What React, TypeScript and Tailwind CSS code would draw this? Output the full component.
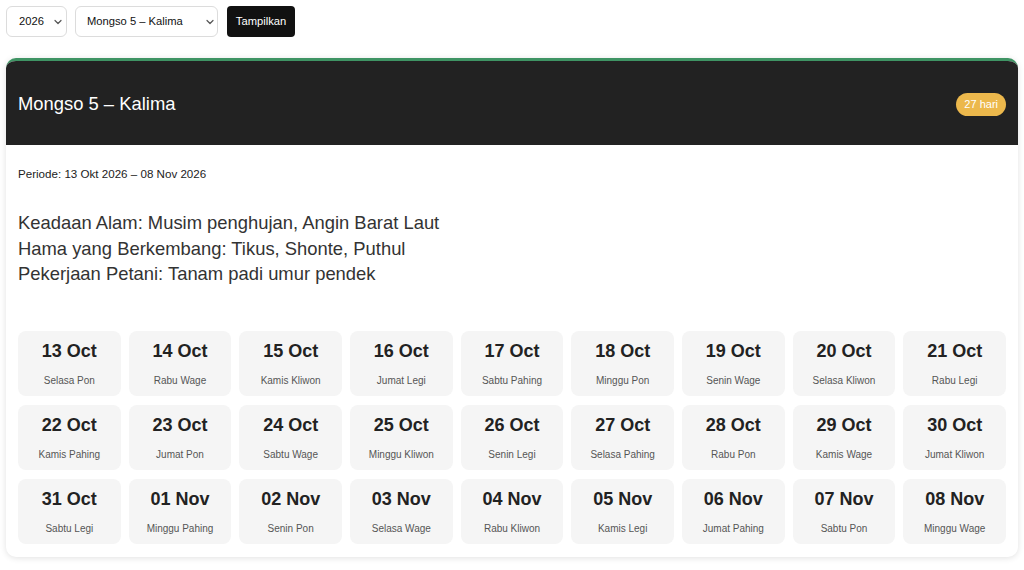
import React from "react";

const days: [string, string][] = [
  ["13 Oct", "Selasa Pon"],
  ["14 Oct", "Rabu Wage"],
  ["15 Oct", "Kamis Kliwon"],
  ["16 Oct", "Jumat Legi"],
  ["17 Oct", "Sabtu Pahing"],
  ["18 Oct", "Minggu Pon"],
  ["19 Oct", "Senin Wage"],
  ["20 Oct", "Selasa Kliwon"],
  ["21 Oct", "Rabu Legi"],
  ["22 Oct", "Kamis Pahing"],
  ["23 Oct", "Jumat Pon"],
  ["24 Oct", "Sabtu Wage"],
  ["25 Oct", "Minggu Kliwon"],
  ["26 Oct", "Senin Legi"],
  ["27 Oct", "Selasa Pahing"],
  ["28 Oct", "Rabu Pon"],
  ["29 Oct", "Kamis Wage"],
  ["30 Oct", "Jumat Kliwon"],
  ["31 Oct", "Sabtu Legi"],
  ["01 Nov", "Minggu Pahing"],
  ["02 Nov", "Senin Pon"],
  ["03 Nov", "Selasa Wage"],
  ["04 Nov", "Rabu Kliwon"],
  ["05 Nov", "Kamis Legi"],
  ["06 Nov", "Jumat Pahing"],
  ["07 Nov", "Sabtu Pon"],
  ["08 Nov", "Minggu Wage"],
];

function Chevron() {
  return (
    <svg width="10" height="10" viewBox="0 0 10 10" className="text-[#555]">
      <path d="M2 3.5 L5 6.5 L8 3.5" fill="none" stroke="currentColor" strokeWidth="1.2" strokeLinecap="round" strokeLinejoin="round" />
    </svg>
  );
}

export default function App() {
  return (
    <div className="min-h-[570px] bg-white px-[6px] pt-[6px] font-[family-name:'Liberation_Sans',Arial,sans-serif]">
      <div className="flex items-center gap-[8px]">
        <div className="flex h-[31px] w-[61px] items-center justify-between rounded-[6px] border border-[#dcdcdc] bg-white pl-[12px] pr-[3px] text-[11.2px] text-[#111]">
          <span>2026</span>
          <Chevron />
        </div>
        <div className="flex h-[31px] w-[143px] items-center justify-between rounded-[6px] border border-[#dcdcdc] bg-white pl-[11px] pr-[2px] text-[11.2px] text-[#111]">
          <span>Mongso 5 – Kalima</span>
          <Chevron />
        </div>
        <button className="ml-[1px] flex h-[31px] w-[68px] items-center justify-center rounded-[4px] bg-[#111] text-[11.2px] text-white">
          Tampilkan
        </button>
      </div>

      <div className="mt-[21px] overflow-hidden rounded-[10px] border-t-[3px] border-[#3f9464] bg-white shadow-[0_1px_6px_rgba(0,0,0,0.12)]">
        <div className="flex h-[84px] items-center justify-between bg-[#222] px-[12px] pt-[2px]">
          <div className="text-[18.4px] text-white">Mongso 5 – Kalima</div>
          <div className="flex h-[23px] items-center rounded-full bg-[#ecb84c] px-[8px] text-[11px] text-white">
            27 hari
          </div>
        </div>
        <div className="px-[12px] pb-[13px] pt-[20px]">
          <div className="text-[11.6px] leading-[18px] text-[#222]">Periode: 13 Okt 2026 – 08 Nov 2026</div>
          <div className="mt-[27px] text-[18.4px] leading-[25.5px] text-[#333]">
            <div>Keadaan Alam: Musim penghujan, Angin Barat Laut</div>
            <div>Hama yang Berkembang: Tikus, Shonte, Puthul</div>
            <div>Pekerjaan Petani: Tanam padi umur pendek</div>
          </div>
          <div className="mt-[44px] grid grid-cols-9 gap-x-[8px] gap-y-[9px]">
            {days.map(([d, n]) => (
              <div key={d} className="flex h-[65px] flex-col items-center rounded-[8px] bg-[#f5f5f5] pt-[9px]">
                <div className="text-[18px] font-bold leading-[22px] text-[#222]">{d}</div>
                <div className="mt-[12px] text-[10px] leading-[14px] text-[#555]">{n}</div>
              </div>
            ))}
          </div>
        </div>
      </div>
    </div>
  );
}
